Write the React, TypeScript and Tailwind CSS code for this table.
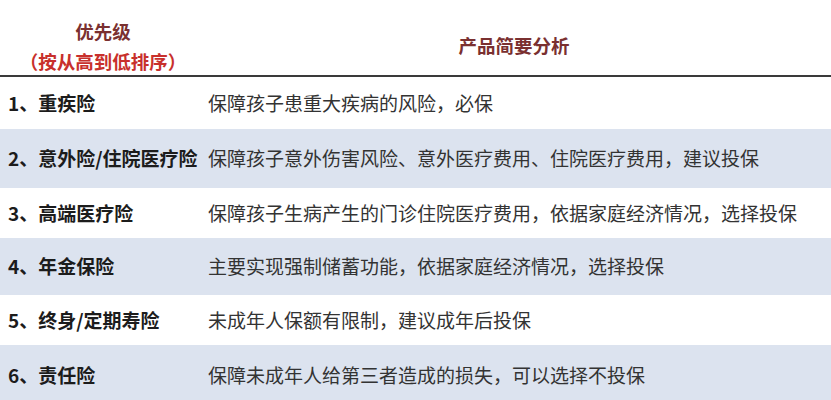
const rows = [
  { name: "1、重疾险", desc: "保障孩子患重大疾病的风险，必保", h: "h-[52px]" },
  { name: "2、意外险/住院医疗险", desc: "保障孩子意外伤害风险、意外医疗费用、住院医疗费用，建议投保", h: "h-[59px]" },
  { name: "3、高端医疗险", desc: "保障孩子生病产生的门诊住院医疗费用，依据家庭经济情况，选择投保", h: "h-[50px]" },
  { name: "4、年金保险", desc: "主要实现强制储蓄功能，依据家庭经济情况，选择投保", h: "h-[57px]" },
  { name: "5、终身/定期寿险", desc: "未成年人保额有限制，建议成年后投保", h: "h-[50px]" },
  { name: "6、责任险", desc: "保障未成年人给第三者造成的损失，可以选择不投保", h: "h-[60px]" },
];

export default function App() {
  return (
    <div
      className="w-[831px] h-[400px] overflow-hidden bg-white"
      style={{ fontFamily: '"Noto Sans CJK SC", "Noto Sans", sans-serif' }}
    >
      <div className="grid grid-cols-[206px_1fr] h-[77px] border-b-2 border-[#3a3a3a]">
        <div className="flex flex-col items-center justify-center font-bold text-[18.5px] leading-[30px] pt-[16px]">
          <span className="text-[#7a3030]">优先级</span>
          <span className="text-[#c8302c]">（按从高到低排序）</span>
        </div>
        <div className="flex items-center justify-center pr-[9px] pt-[16px] font-bold text-[18.5px] text-[#7a3030]">
          产品简要分析
        </div>
      </div>
      {rows.map((r, i) => (
        <div
          key={r.name}
          className={`grid grid-cols-[206px_1fr] items-center ${r.h} ${i % 2 === 1 ? "bg-[#dce3ef]" : "bg-white"}`}
        >
          <div className="pl-[8px] font-bold text-[19px] text-[#1c1c1c] whitespace-nowrap">{r.name}</div>
          <div className="pl-[2px] text-[19px] text-[#333333] whitespace-nowrap">{r.desc}</div>
        </div>
      ))}
    </div>
  );
}
